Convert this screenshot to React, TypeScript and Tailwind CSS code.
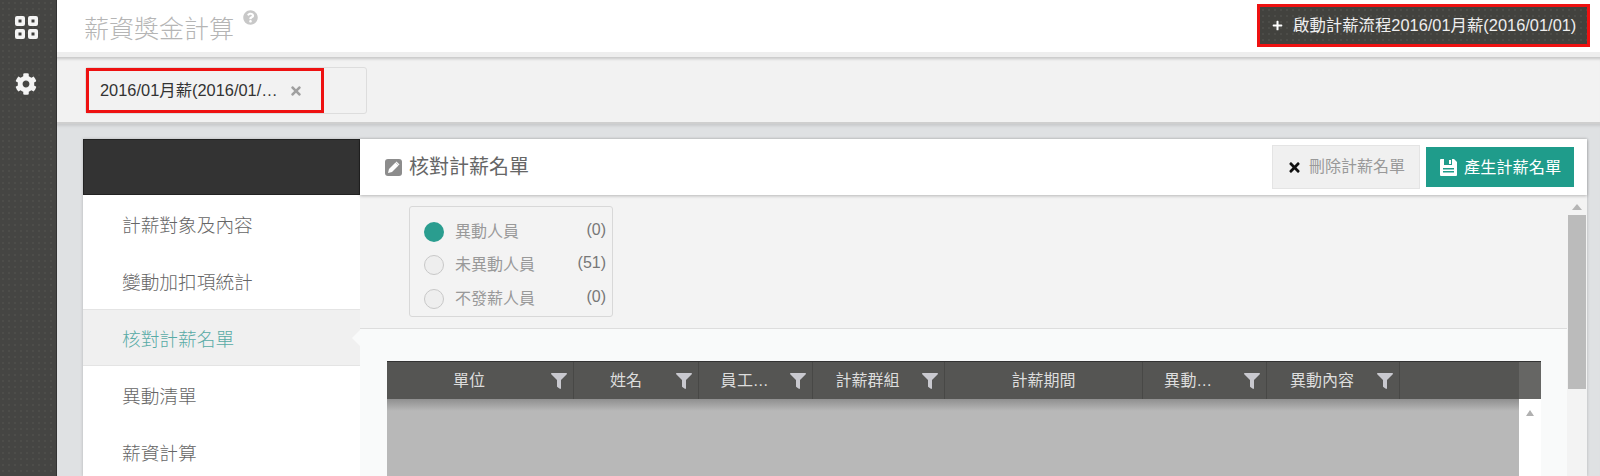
import { FaCog, FaQuestionCircle, FaTimes, FaPlus, FaFilter } from "react-icons/fa";

const menu = ["計薪對象及內容", "變動加扣項統計", "核對計薪名單", "異動清單", "薪資計算"];

const radios = [
  { label: "異動人員", count: "(0)", on: true },
  { label: "未異動人員", count: "(51)", on: false },
  { label: "不發薪人員", count: "(0)", on: false },
];

const columns = [
  { title: "單位", width: "w-[187px]", filter: true, text: "flex-1 text-center" },
  { title: "姓名", width: "w-[125px]", filter: true, text: "flex-1 text-center pl-[2px]" },
  { title: "員工...", width: "w-[114px]", filter: true, text: "flex-1 text-center tracking-[0.5px]" },
  { title: "計薪群組", width: "w-[132px]", filter: true, text: "flex-1 text-center" },
  { title: "計薪期間", width: "w-[198px]", filter: false, text: "flex-1 text-center" },
  { title: "異動...", width: "w-[124px]", filter: true, text: "flex-1 text-center pr-[11px] tracking-[0.5px]" },
  { title: "異動內容", width: "w-[133px]", filter: true, text: "flex-1 text-center" },
];

function GridIcon() {
  return (
    <svg width="24" height="24" viewBox="0 0 24 24" className="text-[#f4f4f4]">
      {[1, 14].map((x) =>
        [1, 14].map((y) => (
          <g key={`${x}-${y}`}>
            <rect x={x} y={y} width="10" height="10" rx="2" fill="currentColor" />
            <rect x={x + 3.5} y={y + 3.5} width="3" height="3" fill="#3d3d3b" />
          </g>
        ))
      )}
    </svg>
  );
}

function FloppyIcon() {
  return (
    <svg width="19" height="19" viewBox="0 0 19 19" className="mr-[6px] shrink-0">
      <path d="M2 1h13l3 3v13a1 1 0 0 1-1 1H2a1 1 0 0 1-1-1V2a1 1 0 0 1 1-1z" fill="#fff" />
      <rect x="5" y="1" width="8" height="6" fill="#1f9c8b" />
      <rect x="10" y="2" width="2" height="4" fill="#fff" />
      <rect x="4" y="10" width="11" height="1.5" fill="#1f9c8b" />
      <rect x="4" y="13" width="11" height="1.5" fill="#1f9c8b" />
    </svg>
  );
}

function PencilIcon() {
  return (
    <svg width="17" height="17" viewBox="0 0 17 17" className="shrink-0">
      <rect width="17" height="17" rx="3" fill="#8c8c8c" />
      <path d="M3 14l1-4 6.5-6.5 3 3L7 13z" fill="#fff" />
      <path d="M11.5 2.5l3 3 -0.8 0.8 -3-3z" fill="#fff" />
    </svg>
  );
}

export default function App() {
  return (
    <div className="flex h-[476px] w-[1600px] overflow-hidden bg-[#dfe1e3] font-['Liberation_Sans','Noto_Sans_CJK_TC',sans-serif]">
      {/* ── Left rail ── */}
      <aside className="flex w-[57px] shrink-0 flex-col items-center gap-[34px] border-r border-[#333] bg-[#454543] bg-[radial-gradient(#4d4d4a_1px,transparent_1px)] bg-[length:6px_6px] pr-[5px] pt-[15px]">
        <GridIcon />
        <FaCog className="h-[22px] w-[22px] text-[#f4f4f4]" />
      </aside>

      <div className="flex min-w-0 flex-1 flex-col">
        {/* ── Header ── */}
        <header className="flex h-[52px] shrink-0 items-start justify-between bg-white pl-[27px] pr-[10px]">
          <div className="flex items-start pt-[11px]">
            <h1 className="text-[25px] leading-[36px] font-light text-[#b5b5b5]">薪資獎金計算</h1>
            <FaQuestionCircle className="ml-[9px] -mt-[1px] h-[15px] w-[15px] text-[#c8c8c8]" />
          </div>
          <button className="mt-[4px] flex h-[43px] w-[333px] items-center border-[3px] border-[#ee1111] bg-[#42423e] bg-[radial-gradient(#4c4c48_1px,transparent_1px)] bg-[length:6px_6px] pl-[12px] text-[16.4px] text-[#eeeeee]">
            <FaPlus className="mr-[10px] h-[11px] w-[11px] text-white" />
            啟動計薪流程2016/01月薪(2016/01/01)
          </button>
        </header>

        {/* ── Tab bar ── */}
        <div className="h-[5px] shrink-0 bg-[#eeeeee]" />
        <div className="h-[67px] shrink-0 border-b-2 border-[#cfcfcf] bg-[#f2f2f2] pl-[28px] pt-[10px] shadow-[inset_0_4px_3px_-2px_rgba(0,0,0,0.18)]">
          <div className="flex h-[47px] w-[282px] rounded-[3px] border border-[#dddddd]">
            <div className="flex h-full w-[238px] items-center border-[3px] border-[#ee1111] bg-[#f2f2f2] pl-[11px] text-[16.4px] text-[#333]">
              <span className="w-[179px] truncate">2016/01月薪(2016/01/01)</span>
              <FaTimes className="ml-[10px] h-[14px] w-[14px] text-[#a0a0a0]" />
            </div>
          </div>
        </div>

        {/* ── Card ── */}
        <div className="flex min-h-0 flex-1 pl-[26px] pr-[13px] pt-[15px] shadow-[inset_0_4px_3px_-2px_rgba(0,0,0,0.1)]">
          <div className="flex min-w-0 flex-1 bg-white shadow-[0_0_3px_rgba(0,0,0,0.2)]">
            {/* menu column */}
            <nav className="flex w-[277px] shrink-0 flex-col">
              <div className="h-[56px] shrink-0 border border-[#222] bg-[#333333]" />
              {menu.map((item, i) =>
                i === 2 ? (
                  <div
                    key={item}
                    className="flex h-[57px] shrink-0 items-center border-y border-[#e4e4e4] bg-[#f0f0f0] pl-[39px] pt-[6px] text-[18.7px] font-light text-[#58aba6]"
                  >
                    {item}
                  </div>
                ) : (
                  <div key={item} className="flex h-[57px] shrink-0 items-center pl-[39px] pt-[6px] text-[18.7px] font-light text-[#666666]">
                    {item}
                  </div>
                )
              )}
            </nav>

            {/* content column */}
            <div className="flex min-w-0 flex-1 flex-col">
              <div className="relative z-10 flex h-[56px] shrink-0 items-center justify-between bg-white pl-[25px] pr-[13px] shadow-[0_1px_3px_rgba(0,0,0,0.25)]">
                <div className="flex items-center gap-[7px] text-[20px] text-[#666]">
                  <PencilIcon />
                  核對計薪名單
                </div>
                <div className="flex items-center gap-[6px]">
                  <button className="flex h-[44px] w-[148px] items-center border border-[#e4e4e4] bg-[#f0f0f0] pl-[14px] text-[16px] text-[#999999]">
                    <FaTimes className="mr-[7px] h-[15px] w-[15px] text-[#111]" />
                    刪除計薪名單
                  </button>
                  <button className="flex h-[40px] w-[148px] items-center bg-[#1f9c8b] pl-[13px] text-[16.2px] text-white">
                    <FloppyIcon />
                    產生計薪名單
                  </button>
                </div>
              </div>

              <div className="flex min-h-0 flex-1">
                <div className="flex min-w-0 flex-1 flex-col">
                  {/* radio filter */}
                  <div className="h-[134px] shrink-0 border-b border-[#dddddd] bg-[#f3f3f3] pl-[49px] pt-[11px]">
                    <div className="flex h-[111px] w-[204px] flex-col justify-center gap-[13.5px] rounded-[3px] border border-[#d8d8d8] pl-[14px] pr-[6px] pt-[7px]">
                      {radios.map((r) => (
                        <div key={r.label} className="flex h-[20px] items-center text-[16px] text-[#999999]">
                          <span
                            className={
                              r.on
                                ? "mr-[11px] h-[20px] w-[20px] rounded-full bg-[#2a9d8f]"
                                : "mr-[11px] h-[20px] w-[20px] rounded-full border border-[#c8c8c8] bg-[#eeeeee]"
                            }
                          />
                          <span className="flex-1">{r.label}</span>
                          <span className="-mt-[4px] text-[#777777]">{r.count}</span>
                        </div>
                      ))}
                    </div>
                  </div>

                  {/* grid */}
                  <div className="relative flex min-h-0 flex-1 flex-col bg-[#f9fafa] pl-[27px] pr-[26px] pt-[32px]">
                    {/* notch pointing at the active menu row */}
                    <span className="absolute -left-[8px] top-[1px] h-0 w-0 border-y-[8px] border-r-[8px] border-y-transparent border-r-[#f9fafa]" />
                    <div className="flex h-[38px] shrink-0 border-t border-[#333] bg-[#555553]">
                      {columns.map((c) => (
                        <div key={c.title} className={`flex ${c.width} shrink-0 items-center border-r border-[#484846] text-[16px] text-[#dddddd]`}>
                          <span className={c.text}>{c.title}</span>
                          {c.filter && <FaFilter className="mr-[6px] h-[16px] w-[16px] text-[#c9c9cf]" />}
                        </div>
                      ))}
                      <div className="flex-1" />
                      <div className="w-[22px] shrink-0 bg-[#666664]" />
                    </div>
                    <div className="flex min-h-0 flex-1">
                      <div className="flex-1 bg-[#b8b8b8] bg-[linear-gradient(#8f8f8f,#b8b8b8_12px)]" />
                      <div className="flex w-[22px] shrink-0 justify-center bg-white pt-[11px]">
                        <span className="h-0 w-0 border-x-[4px] border-b-[6px] border-x-transparent border-b-[#b0b0b0]" />
                      </div>
                    </div>
                  </div>
                </div>

                {/* outer scrollbar */}
                <div className="flex w-[20px] shrink-0 flex-col items-center bg-[#f3f3f3]">
                  <span className="mt-[9px] h-0 w-0 border-x-[5px] border-b-[6px] border-x-transparent border-b-[#b5b5b5]" />
                  <div className="mt-[5px] h-[174px] w-[18px] bg-[#bbbbbb]" />
                </div>
              </div>
            </div>
          </div>
        </div>
      </div>
    </div>
  );
}
